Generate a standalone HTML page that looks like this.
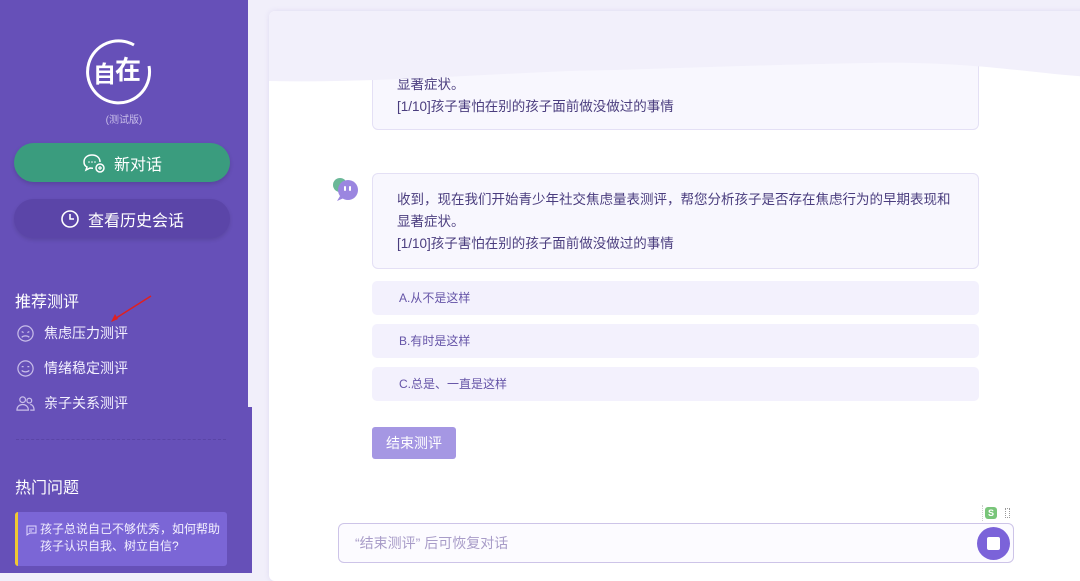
<!DOCTYPE html>
<html><head><meta charset="utf-8"><style>
*{margin:0;padding:0;box-sizing:border-box}
body{width:1080px;height:573px;overflow:hidden;background:#f1effa;font-family:"Liberation Sans","Noto Sans CJK SC",sans-serif;position:relative}
.side{position:absolute;left:0;top:0;width:248px;height:573px;background:#6650b8;color:#fff}
.side2{position:absolute;left:248px;top:407px;width:4px;height:166px;background:#6650b8}
.card{position:absolute;left:269px;top:11px;width:820px;height:570px;background:#fff;border-radius:6px;box-shadow:0 0 6px rgba(100,80,180,.12);overflow:hidden}
.btn{position:absolute;left:14px;width:216px;height:39px;border-radius:20px;display:flex;align-items:center;justify-content:center;font-size:16px;gap:8px}
.item{position:absolute;left:16px;font-size:14px;display:flex;align-items:center;gap:9px;color:#f4f1ff}
.bub{position:absolute;left:103px;width:607px;background:#f8f7fe;border:1px solid #e4e0f5;border-radius:6px;color:#4a3d7e;font-size:13.5px;line-height:22px;padding:0 21px 0 24px}
.opt{position:absolute;left:103px;width:607px;height:34px;background:#f3f1fd;border-radius:5px;font-size:12px;color:#6655a8;line-height:34px;padding-left:27px}
</style></head><body>
<div class="side">
 <svg style="position:absolute;left:84px;top:36px" width="70" height="70" viewBox="0 0 70 70"><path d="M50 9A31 31 0 1 0 65 30" fill="none" stroke="#fff" stroke-width="3"/>
 <text x="9" y="46" font-size="23" font-weight="bold" fill="#fff" font-family="Noto Sans CJK SC">自</text><text x="31" y="43" font-size="26" font-weight="bold" fill="#fff" font-family="Noto Sans CJK SC">在</text></svg>
 <div style="position:absolute;left:0;width:248px;top:111px;text-align:center;font-size:10px;color:#c8bde9">(测试版)</div>
 <div class="btn" style="top:143px;background:#3a9c7e;box-shadow:0 2px 4px rgba(0,0,0,.15)"><svg width="24" height="20" viewBox="0 0 24 20"><path d="M10 2C5 2 2 5 2 9c0 2 1 4 3 5l-1 3 4-2c1 0 2 .3 3 .3" fill="none" stroke="#fff" stroke-width="1.5"/><path d="M10 2c5 0 8 3 8 7" fill="none" stroke="#fff" stroke-width="1.5"/><circle cx="18" cy="15" r="4" fill="none" stroke="#fff" stroke-width="1.5"/><path d="M16 15h4M18 13v4" stroke="#fff" stroke-width="1.2"/><circle cx="7" cy="9" r=".8" fill="#fff"/><circle cx="10" cy="9" r=".8" fill="#fff"/><circle cx="13" cy="9" r=".8" fill="#fff"/></svg>新对话</div>
 <div class="btn" style="top:199px;background:#5b45a8;box-shadow:0 2px 4px rgba(0,0,0,.12)"><svg width="20" height="20" viewBox="0 0 20 20"><circle cx="10" cy="10" r="8" fill="none" stroke="#fff" stroke-width="1.6"/><path d="M10 5v5h4" fill="none" stroke="#fff" stroke-width="1.6"/></svg>查看历史会话</div>
 <div style="position:absolute;left:15px;top:288px;font-size:16px">推荐测评</div>
 <div class="item" style="top:323px"><svg width="19" height="19" viewBox="0 0 20 20" fill="none" stroke="#c8bde9" stroke-width="1.3"><circle cx="10" cy="10" r="8"/><path d="M6 14c2-2 6-2 8 0M6 8l2 1M14 8l-2 1"/></svg>焦虑压力测评</div>
 <div class="item" style="top:358px"><svg width="19" height="19" viewBox="0 0 20 20" fill="none" stroke="#c8bde9" stroke-width="1.3"><circle cx="10" cy="10" r="8"/><path d="M6 12c2 2 6 2 8 0M6 8h2M12 8h2"/></svg>情绪稳定测评</div>
 <div class="item" style="top:393px"><svg width="19" height="19" viewBox="0 0 20 20" fill="none" stroke="#c8bde9" stroke-width="1.3"><circle cx="7" cy="6" r="3"/><path d="M1 17c0-4 3-6 6-6s6 2 6 6z"/><circle cx="14" cy="7" r="2.5"/><path d="M15 11c2 0 4 2 4 6h-4"/></svg>亲子关系测评</div>
 <svg style="position:absolute;left:105px;top:294px" width="50" height="30"><path d="M46 2L8 26" stroke="#e02020" stroke-width="1.5"/><path d="M6 28l4-8 3 5z" fill="#e02020"/></svg>
 <div style="position:absolute;left:16px;top:439px;width:210px;border-top:1px dashed #5a45a6"></div>
 <div style="position:absolute;left:15px;top:474px;font-size:16px">热门问题</div>
 <div style="position:absolute;left:15px;top:512px;width:212px;height:54px;background:#7b66d6;border-left:3px solid #f0c832;border-radius:3px;padding:9px 4px 0 22px;font-size:12px;line-height:17px;color:#f4f1ff">
 <svg style="position:absolute;left:8px;top:13px" width="11" height="11" viewBox="0 0 11 11" fill="none" stroke="#e0d8ff"><path d="M1 1h9v7H4L1 10z"/><path d="M3 4h5M3 6h3"/></svg>孩子总说自己不够优秀，如何帮助孩子认识自我、树立自信?</div>
</div>
<div class="side2"></div>
<div class="card">
 <div class="bub" style="top:-20px;height:139px;padding-top:82px;background:#f8f7fe">显著症状。<br>[1/10]孩子害怕在别的孩子面前做没做过的事情</div>
 <svg style="position:absolute;left:0;top:0" width="820" height="110"><path d="M0 0H820V66C760 62 700 50 600 52C480 54 400 58 300 60C200 64 100 72 0 70Z" fill="#f2f0fb"/></svg>
 <svg style="position:absolute;left:62px;top:165px" width="30" height="28"><circle cx="9" cy="9" r="7" fill="#6bb898"/><circle cx="17" cy="14" r="10" fill="#9b86e0"/><path d="M9 20l-3 5 7-3z" fill="#9b86e0"/><rect x="13" y="10" width="2" height="5" rx="1" fill="#fff"/><rect x="18" y="10" width="2" height="5" rx="1" fill="#fff"/></svg>
 <div class="bub" style="top:162px;height:96px;padding-top:15px">收到，现在我们开始青少年社交焦虑量表测评，帮您分析孩子是否存在焦虑行为的早期表现和显著症状。<br>[1/10]孩子害怕在别的孩子面前做没做过的事情</div>
 <div class="opt" style="top:270px">A.从不是这样</div>
 <div class="opt" style="top:313px">B.有时是这样</div>
 <div class="opt" style="top:356px">C.总是、一直是这样</div>
 <div style="position:absolute;left:103px;top:416px;width:84px;height:32px;background:#a597e3;border-radius:3px;color:#fff;font-size:14px;text-align:center;line-height:32px">结束测评</div>
 <div style="position:absolute;left:713px;top:494px;width:16px;height:16px;border-left:1px dotted #ccc"></div>
 <div style="position:absolute;left:716px;top:496px;width:12px;height:12px;background:#79c57a;border-radius:3px;color:#fff;font-size:9px;text-align:center;line-height:12px;font-weight:bold">S</div>
 <div style="position:absolute;left:736px;top:497px;width:5px;height:10px;border:1px dotted #999"></div>
 <div style="position:absolute;left:69px;top:512px;width:676px;height:40px;border:1px solid #cdc4e8;border-radius:6px;background:#fcfbff;font-size:14px;color:#a89cc8;line-height:38px;padding-left:16px">“结束测评” 后可恢复对话
  <div style="position:absolute;right:3px;top:3px;width:33px;height:33px;border-radius:50%;background:#7b63d9"><div style="position:absolute;left:10px;top:10px;width:13px;height:13px;background:#fff;border-radius:2px"></div></div></div>
</div>
</body></html>
